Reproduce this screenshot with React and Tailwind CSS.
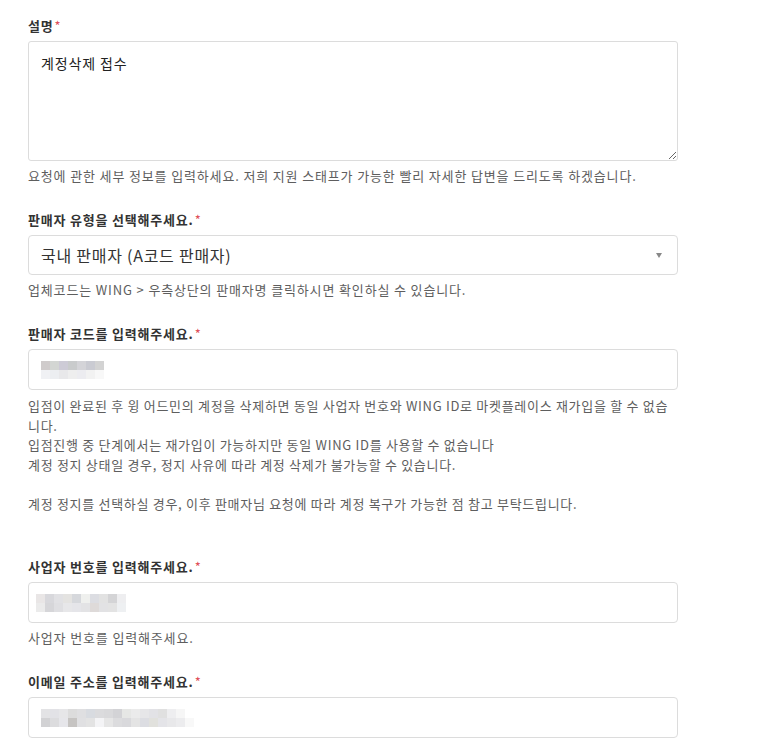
const font = { fontFamily: '"Noto Sans CJK KR", "Noto Sans", sans-serif' }

function Label({ children }) {
  return (
    <label className="block text-[13px] font-bold leading-[20px] tracking-[0.8px] text-[#333]">
      {children}
      <span className="ml-px text-[#e0505a] font-normal">*</span>
    </label>
  )
}

function Help({ children }) {
  return <p className="mt-[5px] text-[13px] leading-[20px] tracking-[0.85px] text-[#5e5e5e]">{children}</p>
}

// blurred (pixelated) value, one class list per row
function Blur({ rows }) {
  return (
    <div className="flex flex-col">
      {rows.map((row, i) => (
        <div key={i} className="flex">
          {row.map((c, j) => (
            <div key={j} className={'w-[9px] h-[9px] ' + c} />
          ))}
        </div>
      ))}
    </div>
  )
}

const codeBlur = [
  ['bg-[#cfcbcb]', 'bg-[#d3d6d3]', 'bg-[#cdcbd6]', 'bg-[#c9cbcc]', 'bg-[#d4d4d8]', 'bg-[#cacbd2]', 'bg-[#d3d3d3]'],
  ['bg-[#f0f1f4]', 'bg-[#eceef1]', 'bg-[#e8e8ea]', 'bg-[#eeeeee]', 'bg-[#ececf0]', 'bg-[#f2f2f2]', 'bg-[#f8f8f8]'],
]

const bizBlur = [
  ['bg-[#e9e6e6]', 'bg-[#d8d8dc]', 'bg-[#e1e1e4]', 'bg-[#e4e3e1]', 'bg-[#d6d8dc]', 'bg-[#eff0ee]', 'bg-[#dcdde2]', 'bg-[#e2e2e2]', 'bg-[#d4d4d6]', 'bg-[#eeeef0]'],
  ['bg-[#ebebeb]', 'bg-[#d6d6d9]', 'bg-[#dfdfe2]', 'bg-[#e7e7e9]', 'bg-[#e5e5e9]', 'bg-[#e3e3e5]', 'bg-[#dedad9]', 'bg-[#e2e2e4]', 'bg-[#e3e3e3]', 'bg-[#eef0f2]'],
]

const mailBlur = [
  ['bg-[#e3e3e5]', 'bg-[#e2e2e6]', 'bg-[#e6e6e8]', 'bg-[#dcdcdc]', 'bg-[#dfdfe1]', 'bg-[#d8dbe0]', 'bg-[#dbdbdd]', 'bg-[#d9d9db]', 'bg-[#d3d3d6]', 'bg-[#e6e7e5]', 'bg-[#ebebeb]', 'bg-[#e6e6e8]', 'bg-[#e2e2e6]', 'bg-[#e0e0e0]', 'bg-[#eeeef0]', 'bg-[#f6f6f6]', 'bg-[#ffffff]'],
  ['bg-[#d2d2d4]', 'bg-[#dcdcde]', 'bg-[#e6e6ea]', 'bg-[#c6c4c2]', 'bg-[#e0e0e2]', 'bg-[#e3e3e3]', 'bg-[#f4f4f6]', 'bg-[#e6e6e6]', 'bg-[#dcdcde]', 'bg-[#d9d9dc]', 'bg-[#e4e4e4]', 'bg-[#dcdde2]', 'bg-[#e1e1dd]', 'bg-[#e4e4e8]', 'bg-[#e8e8ea]', 'bg-[#ececee]', 'bg-[#f8f8f8]'],
]

function Field({ children }) {
  return (
    <div className="mt-[5px] flex h-[41px] items-center rounded-[4px] border border-[#dcdcdc] bg-white px-3">
      {children}
    </div>
  )
}

export default function App() {
  return (
    <div className="min-h-screen bg-white pl-[28px] pt-[16px]" style={font}>
      <div className="w-[650px]">
        <Label>설명</Label>
        <textarea
          readOnly
          defaultValue="계정삭제 접수"
          className="mt-[5px] block h-[120px] w-full rounded-[3px] border border-[#dcdcdc] px-3 py-[11px] text-[14px] leading-[20px] tracking-[0.85px] text-[#222] outline-none"
        />
        <Help>요청에 관한 세부 정보를 입력하세요. 저희 지원 스태프가 가능한 빨리 자세한 답변을 드리도록 하겠습니다.</Help>

        <div className="mt-[24px]">
          <Label>판매자 유형을 선택해주세요.</Label>
          <div className="mt-[5px] flex h-[40px] items-center justify-between rounded-[4px] border border-[#dcdcdc] bg-white pl-3 pr-[15px]">
            <span className="text-[16px] tracking-[0.75px] text-[#333]">국내 판매자 (A코드 판매자)</span>
            <svg width="6" height="5" viewBox="0 0 6 5">
              <path d="M0 0H6L3 5Z" fill="#888" />
            </svg>
          </div>
          <Help>업체코드는 WING &gt; 우측상단의 판매자명 클릭하시면 확인하실 수 있습니다.</Help>
        </div>

        <div className="mt-[24px]">
          <Label>판매자 코드를 입력해주세요.</Label>
          <Field>
            <Blur rows={codeBlur} />
          </Field>
          <div className="mt-[6px] pb-[20px] text-[13px] leading-[19.5px] tracking-[0.7px] text-[#5e5e5e]">
            <p>입점이 완료된 후 윙 어드민의 계정을 삭제하면 동일 사업자 번호와 WING ID로 마켓플레이스 재가입을 할 수 없습니다.</p>
            <p>입점진행 중 단계에서는 재가입이 가능하지만 동일 WING ID를 사용할 수 없습니다</p>
            <p>계정 정지 상태일 경우, 정지 사유에 따라 계정 삭제가 불가능할 수 있습니다.</p>
            <p>&nbsp;</p>
            <p>계정 정지를 선택하실 경우, 이후 판매자님 요청에 따라 계정 복구가 가능한 점 참고 부탁드립니다.</p>
          </div>
        </div>

        <div className="mt-[24px]">
          <Label>사업자 번호를 입력해주세요.</Label>
          <Field>
            <div className="-ml-[5px]">
              <Blur rows={bizBlur} />
            </div>
          </Field>
          <Help>사업자 번호를 입력해주세요.</Help>
        </div>

        <div className="mt-[24px]">
          <Label>이메일 주소를 입력해주세요.</Label>
          <Field>
            <Blur rows={mailBlur} />
          </Field>
        </div>
      </div>
    </div>
  )
}
